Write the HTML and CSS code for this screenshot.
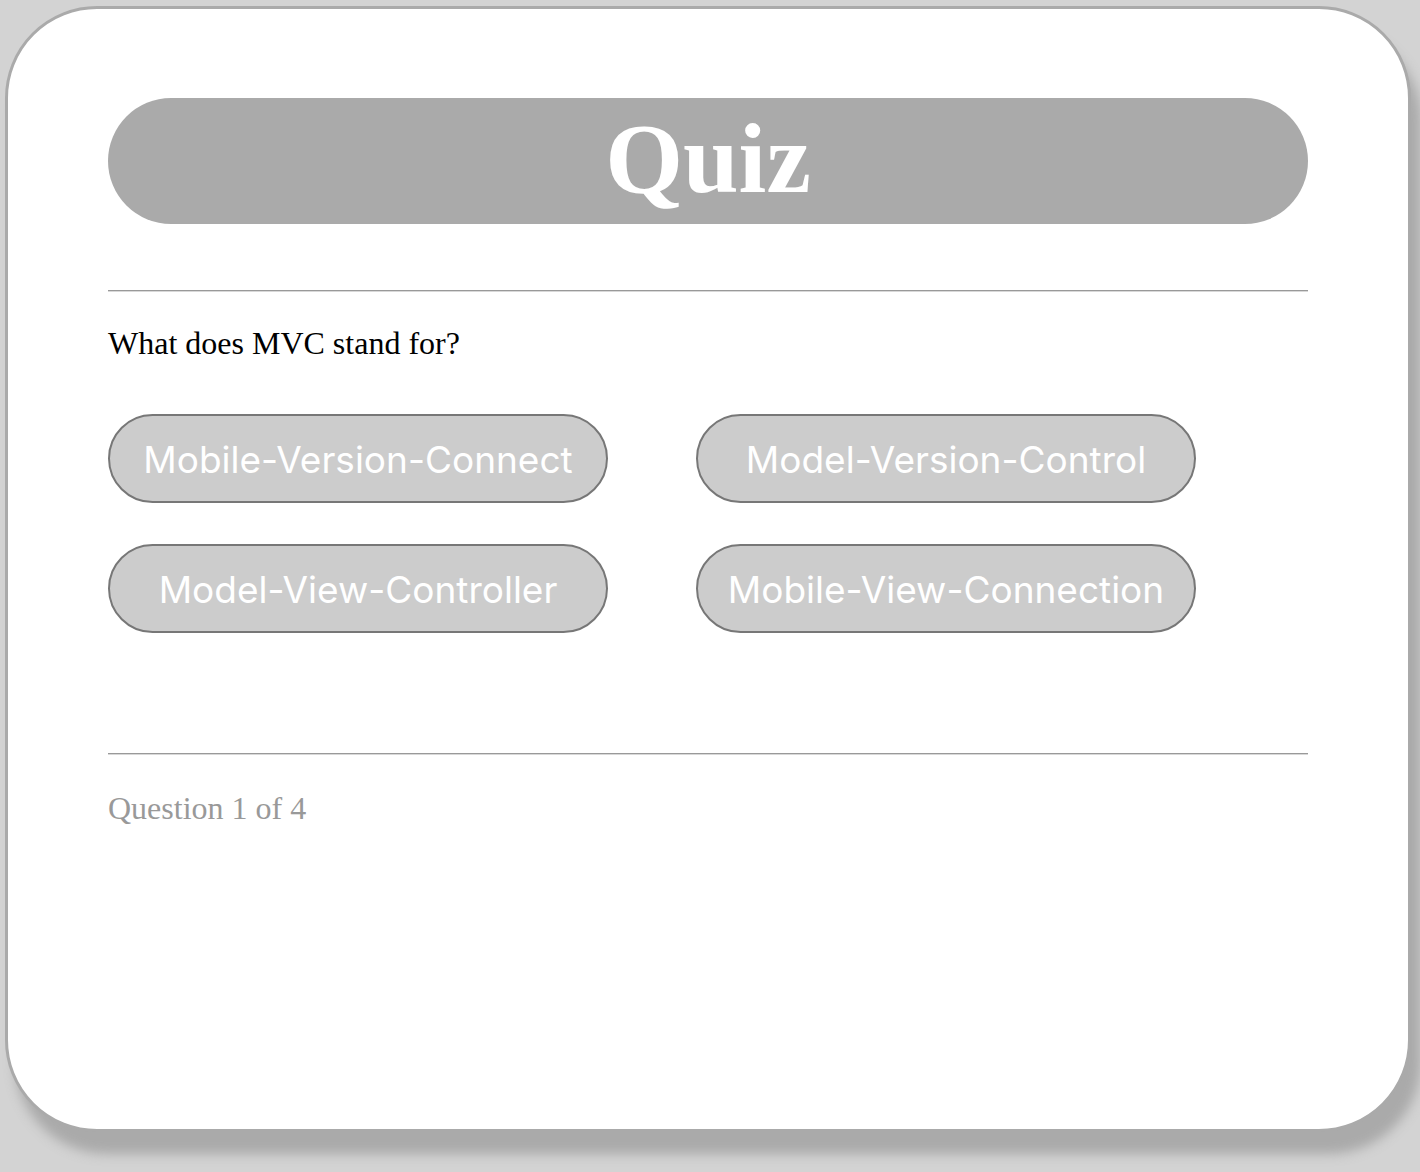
FILE: index.html
```html
<!DOCTYPE html>
<html>
<head>
<meta charset="utf-8">
<link rel="stylesheet" href="styles.css">
</head>
<body>
<div class="card">
  <h1 class="title">Quiz</h1>
  <hr class="rule rule-top">
  <p class="question">What does MVC stand for?</p>
  <div class="answers">
    <button class="answer">Mobile-Version-Connect</button>
    <button class="answer">Model-Version-Control</button>
    <button class="answer">Model-View-Controller</button>
    <button class="answer">Mobile-View-Connection</button>
  </div>
  <hr class="rule rule-bottom">
  <p class="progress">Question 1 of 4</p>
</div>
</body>
</html>
```
FILE: styles.css
```css
html, body {
  margin: 0;
  padding: 0;
}
body {
  background: #d3d3d3;
  font-family: "Liberation Serif", "Times New Roman", serif;
  width: 1420px;
  height: 1172px;
  overflow: hidden;
}
.card {
  box-sizing: border-box;
  margin: 6px 0 0 5px;
  width: 1406px;
  height: 1126px;
  padding: 89px 100px 0 100px;
  background: #fff;
  border: 3px solid #aaa;
  border-radius: 92px;
  box-shadow: 10px 22px 12px #aaa;
}
.title {
  margin: 0;
  height: 126px;
  line-height: 122px;
  border-radius: 63px;
  background: #aaa;
  color: #fff;
  text-align: center;
  font-size: 100px;
  font-weight: bold;
}
.rule {
  margin: 0;
  border: 0;
  height: 0;
  border-top: 1px solid #999;
  border-bottom: 1px solid #d8d8d8;
}
.rule-top {
  margin-top: 66px;
}
.question {
  margin: 33px 0 0 0;
  font-size: 32px;
  line-height: 37px;
  color: #000;
}
.answers {
  display: grid;
  grid-template-columns: 500px 500px;
  grid-auto-rows: 89px;
  column-gap: 88px;
  row-gap: 41px;
  margin-top: 52px;
}
.answer {
  box-sizing: border-box;
  height: 89px;
  border: 2px solid #777;
  border-radius: 45px;
  background: #ccc;
  color: #fff;
  font-family: Inter, "Liberation Sans", sans-serif;
  font-size: 37px;
  padding: 2px 0 0 0;
}
.rule-bottom {
  margin-top: 120px;
}
.progress {
  margin: 35px 0 0 0;
  font-size: 32px;
  line-height: 37px;
  color: #999;
}
```
